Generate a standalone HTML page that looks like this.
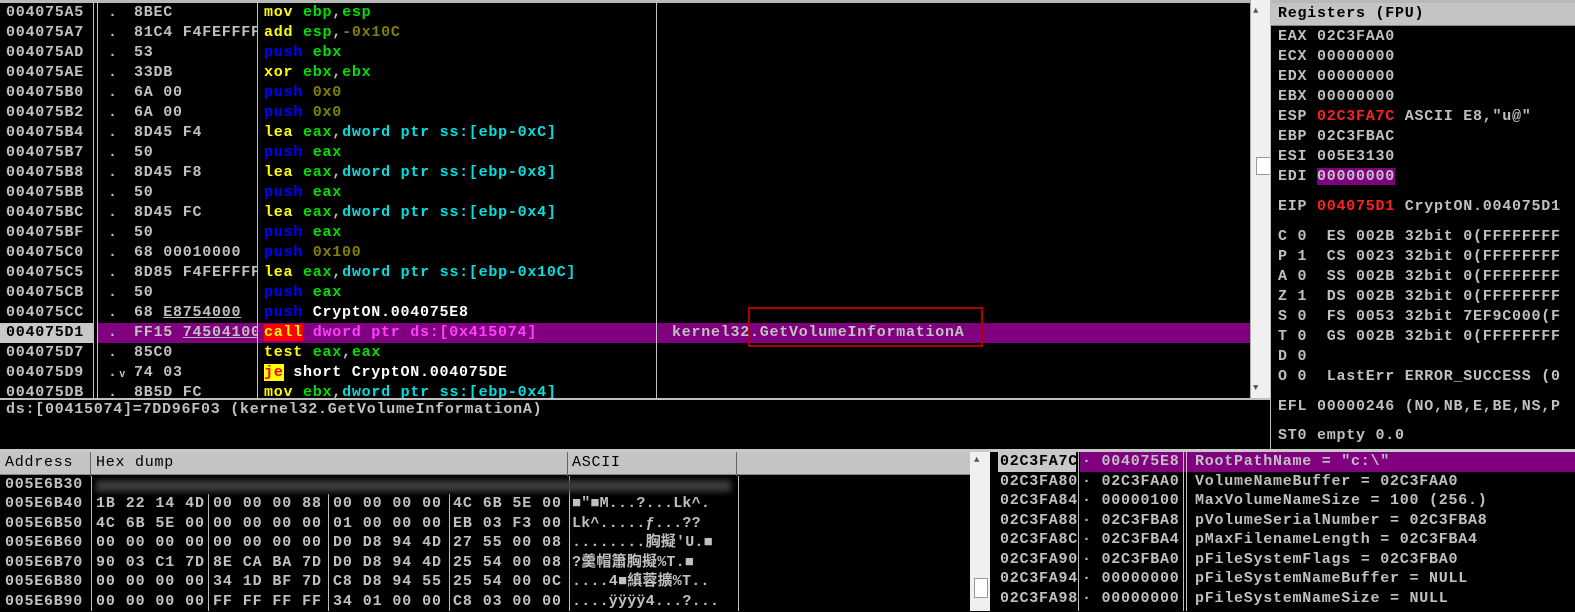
<!DOCTYPE html>
<html><head><meta charset="utf-8"><style>
*{margin:0;padding:0;box-sizing:border-box}
body{width:1575px;height:611px;background:#000;position:relative;overflow:hidden;font-family:"Liberation Mono","DejaVu Sans Mono","Noto Sans CJK SC",monospace;font-size:15px;letter-spacing:0.75px;color:#c0c0c0;font-weight:bold}
.a{position:absolute;white-space:pre;line-height:20px;height:20px}
.vl{position:absolute;background:#c0c0c0;width:1px}
.y{color:#ffff00}.b{color:#0000ff}.g{color:#00e000}.o{color:#808000}.c{color:#00e0e0}.w{color:#fff}.m{color:#ff40ff}.r{color:#ff2020}
.hdr{position:absolute;background:#c4c4c4;color:#000;line-height:22px;height:23px;font-weight:normal;border-bottom:1px solid #888}
.d{position:absolute;white-space:pre;line-height:20px;height:20px;letter-spacing:0.9px}
.as{position:absolute;white-space:pre;line-height:20px;height:20px;width:165px;overflow:hidden;letter-spacing:0.2px}
</style></head><body>
<div style="position:absolute;left:0;top:0;width:1250px;height:3px;background:#b8b8b8"></div>
<div style="position:absolute;left:97px;top:323px;width:1153px;height:20px;background:#800080"></div>
<div style="position:absolute;left:0;top:323px;width:93px;height:20px;background:#c8c8c8"></div>
<div class="vl" style="left:93px;top:0;height:398px"></div>
<div class="vl" style="left:97px;top:0;height:398px"></div>
<div class="vl" style="left:257px;top:0;height:398px"></div>
<div class="vl" style="left:656px;top:0;height:398px"></div>
<div style="position:absolute;left:748px;top:307px;width:235px;height:40px;border:2px solid #b00000"></div>

<div class="a" style="left:6px;top:3px">004075A5</div><div class="a" style="left:108px;top:3px">.</div><div class="a" style="left:134px;top:3px">8BEC</div><div class="a" style="left:264px;top:3px"><span class="y">mov</span> <span class="g">ebp</span>,<span class="g">esp</span></div>
<div class="a" style="left:6px;top:23px">004075A7</div><div class="a" style="left:108px;top:23px">.</div><div class="a" style="left:134px;top:23px;width:123px;overflow:hidden">81C4 F4FEFFFF</div><div class="a" style="left:264px;top:23px"><span class="y">add</span> <span class="g">esp</span>,<span class="o">-0x10C</span></div>
<div class="a" style="left:6px;top:43px">004075AD</div><div class="a" style="left:108px;top:43px">.</div><div class="a" style="left:134px;top:43px">53</div><div class="a" style="left:264px;top:43px"><span class="b">push</span> <span class="g">ebx</span></div>
<div class="a" style="left:6px;top:63px">004075AE</div><div class="a" style="left:108px;top:63px">.</div><div class="a" style="left:134px;top:63px">33DB</div><div class="a" style="left:264px;top:63px"><span class="y">xor</span> <span class="g">ebx</span>,<span class="g">ebx</span></div>
<div class="a" style="left:6px;top:83px">004075B0</div><div class="a" style="left:108px;top:83px">.</div><div class="a" style="left:134px;top:83px">6A 00</div><div class="a" style="left:264px;top:83px"><span class="b">push</span> <span class="o">0x0</span></div>
<div class="a" style="left:6px;top:103px">004075B2</div><div class="a" style="left:108px;top:103px">.</div><div class="a" style="left:134px;top:103px">6A 00</div><div class="a" style="left:264px;top:103px"><span class="b">push</span> <span class="o">0x0</span></div>
<div class="a" style="left:6px;top:123px">004075B4</div><div class="a" style="left:108px;top:123px">.</div><div class="a" style="left:134px;top:123px">8D45 F4</div><div class="a" style="left:264px;top:123px"><span class="y">lea</span> <span class="g">eax</span>,<span class="c">dword ptr ss:[ebp-0xC]</span></div>
<div class="a" style="left:6px;top:143px">004075B7</div><div class="a" style="left:108px;top:143px">.</div><div class="a" style="left:134px;top:143px">50</div><div class="a" style="left:264px;top:143px"><span class="b">push</span> <span class="g">eax</span></div>
<div class="a" style="left:6px;top:163px">004075B8</div><div class="a" style="left:108px;top:163px">.</div><div class="a" style="left:134px;top:163px">8D45 F8</div><div class="a" style="left:264px;top:163px"><span class="y">lea</span> <span class="g">eax</span>,<span class="c">dword ptr ss:[ebp-0x8]</span></div>
<div class="a" style="left:6px;top:183px">004075BB</div><div class="a" style="left:108px;top:183px">.</div><div class="a" style="left:134px;top:183px">50</div><div class="a" style="left:264px;top:183px"><span class="b">push</span> <span class="g">eax</span></div>
<div class="a" style="left:6px;top:203px">004075BC</div><div class="a" style="left:108px;top:203px">.</div><div class="a" style="left:134px;top:203px">8D45 FC</div><div class="a" style="left:264px;top:203px"><span class="y">lea</span> <span class="g">eax</span>,<span class="c">dword ptr ss:[ebp-0x4]</span></div>
<div class="a" style="left:6px;top:223px">004075BF</div><div class="a" style="left:108px;top:223px">.</div><div class="a" style="left:134px;top:223px">50</div><div class="a" style="left:264px;top:223px"><span class="b">push</span> <span class="g">eax</span></div>
<div class="a" style="left:6px;top:243px">004075C0</div><div class="a" style="left:108px;top:243px">.</div><div class="a" style="left:134px;top:243px">68 00010000</div><div class="a" style="left:264px;top:243px"><span class="b">push</span> <span class="o">0x100</span></div>
<div class="a" style="left:6px;top:263px">004075C5</div><div class="a" style="left:108px;top:263px">.</div><div class="a" style="left:134px;top:263px;width:123px;overflow:hidden">8D85 F4FEFFFF</div><div class="a" style="left:264px;top:263px"><span class="y">lea</span> <span class="g">eax</span>,<span class="c">dword ptr ss:[ebp-0x10C]</span></div>
<div class="a" style="left:6px;top:283px">004075CB</div><div class="a" style="left:108px;top:283px">.</div><div class="a" style="left:134px;top:283px">50</div><div class="a" style="left:264px;top:283px"><span class="b">push</span> <span class="g">eax</span></div>
<div class="a" style="left:6px;top:303px">004075CC</div><div class="a" style="left:108px;top:303px">.</div><div class="a" style="left:134px;top:303px">68 <u>E8754000</u></div><div class="a" style="left:264px;top:303px"><span class="b">push</span> <span class="w">CryptON.004075E8</span></div>
<div class="a" style="left:6px;top:323px;color:#000">004075D1</div><div class="a" style="left:108px;top:323px">.</div><div class="a" style="left:134px;top:323px;width:123px;overflow:hidden">FF15 <u>74504100</u></div><div class="a" style="left:264px;top:323px"><span style="background:#ff0000;color:#ffff00">call</span> <span class="m">dword ptr ds:[0x415074]</span></div><div class="a" style="left:672px;top:323px">kernel32.GetVolumeInformationA</div>
<div class="a" style="left:6px;top:343px">004075D7</div><div class="a" style="left:108px;top:343px">.</div><div class="a" style="left:134px;top:343px">85C0</div><div class="a" style="left:264px;top:343px"><span class="y">test</span> <span class="g">eax</span>,<span class="g">eax</span></div>
<div class="a" style="left:6px;top:363px">004075D9</div><div class="a" style="left:108px;top:363px">.ᵥ</div><div class="a" style="left:134px;top:363px">74 03</div><div class="a" style="left:264px;top:363px"><span style="background:#ffff00;color:#ff0000">je</span> <span class="w">short CryptON.004075DE</span></div>
<div class="a" style="left:6px;top:383px;height:15px;overflow:hidden">004075DB</div><div class="a" style="left:108px;top:383px;height:15px;overflow:hidden">.</div><div class="a" style="left:134px;top:383px;height:15px;overflow:hidden">8B5D FC</div><div class="a" style="left:264px;top:383px;height:15px;overflow:hidden"><span class="y">mov</span> <span class="g">ebx</span>,<span class="c">dword ptr ss:[ebp-0x4]</span></div>

<div style="position:absolute;left:1250px;top:0;width:20px;height:400px;background:#f0f0f0;border-left:1px solid #aaa"></div>
<div style="position:absolute;left:1256px;top:157px;width:15px;height:18px;background:#fff;border:1px solid #999"></div>
<div style="position:absolute;left:1253px;top:6px;font-size:9px;color:#555">▲</div>
<div style="position:absolute;left:1253px;top:383px;font-size:9px;color:#555">▼</div>
<div style="position:absolute;left:0;top:398px;width:1270px;height:2px;background:#c0c0c0"></div>
<div class="a" style="left:6px;top:400px">ds:[00415074]=7DD96F03 (kernel32.GetVolumeInformationA)</div>

<div class="vl" style="left:1270px;top:0;height:452px"></div>
<div style="position:absolute;left:1271px;top:0;width:304px;height:3px;background:#b8b8b8"></div>
<div class="hdr" style="left:1271px;top:3px;width:304px;padding-left:7px;font-weight:bold">Registers (FPU)</div>
<div class="a" style="left:1278px;top:27px">EAX 02C3FAA0</div>
<div class="a" style="left:1278px;top:47px">ECX 00000000</div>
<div class="a" style="left:1278px;top:67px">EDX 00000000</div>
<div class="a" style="left:1278px;top:87px">EBX 00000000</div>
<div class="a" style="left:1278px;top:107px">ESP <span class="r">02C3FA7C</span> ASCII E8,"u@"</div>
<div class="a" style="left:1278px;top:127px">EBP 02C3FBAC</div>
<div class="a" style="left:1278px;top:147px">ESI 005E3130</div>
<div class="a" style="left:1278px;top:167px">EDI <span style="background:#800080">00000000</span></div>
<div class="a" style="left:1278px;top:197px">EIP <span class="r">004075D1</span> CryptON.004075D1</div>
<div class="a" style="left:1278px;top:227px">C 0  ES 002B 32bit 0(FFFFFFFF</div>
<div class="a" style="left:1278px;top:247px">P 1  CS 0023 32bit 0(FFFFFFFF</div>
<div class="a" style="left:1278px;top:267px">A 0  SS 002B 32bit 0(FFFFFFFF</div>
<div class="a" style="left:1278px;top:287px">Z 1  DS 002B 32bit 0(FFFFFFFF</div>
<div class="a" style="left:1278px;top:307px">S 0  FS 0053 32bit 7EF9C000(F</div>
<div class="a" style="left:1278px;top:327px">T 0  GS 002B 32bit 0(FFFFFFFF</div>
<div class="a" style="left:1278px;top:347px">D 0</div>
<div class="a" style="left:1278px;top:367px">O 0  LastErr ERROR_SUCCESS (0</div>
<div class="a" style="left:1278px;top:397px">EFL 00000246 (NO,NB,E,BE,NS,P</div>
<div class="a" style="left:1278px;top:426px">ST0 empty 0.0</div>

<div style="position:absolute;left:0;top:449px;width:1575px;height:3px;background:#c8c8c8"></div>

<div class="hdr" style="left:0;top:452px;width:970px"></div>
<div class="a" style="left:5px;top:453px;color:#000;font-weight:normal">Address</div>
<div class="a" style="left:96px;top:453px;color:#000;font-weight:normal">Hex dump</div>
<div class="a" style="left:572px;top:453px;color:#000;font-weight:normal">ASCII</div>
<div class="vl" style="left:90px;top:452px;height:24px;background:#666"></div>
<div class="vl" style="left:567px;top:452px;height:24px;background:#666"></div>
<div class="vl" style="left:736px;top:452px;height:24px;background:#666"></div>
<div class="vl" style="left:91px;top:476px;height:135px"></div>
<div class="vl" style="left:208px;top:494px;height:117px"></div>
<div class="vl" style="left:328px;top:494px;height:117px"></div>
<div class="vl" style="left:449px;top:494px;height:117px"></div>
<div class="vl" style="left:569px;top:476px;height:135px"></div>
<div class="vl" style="left:738px;top:476px;height:135px"></div>
<div class="a" style="left:5px;top:475px">005E6B30</div>
<div style="position:absolute;left:96px;top:480px;width:635px;height:12px;background:#3a3a3a;filter:blur(3px)"></div>

<div class="a" style="left:5px;top:494px">005E6B40</div><div class="d" style="left:96px;top:494px">1B 22 14 4D</div><div class="d" style="left:213px;top:494px">00 00 00 88</div><div class="d" style="left:333px;top:494px">00 00 00 00</div><div class="d" style="left:453px;top:494px">4C 6B 5E 00</div><div class="as" style="left:572px;top:494px">■"■M...?...Lk^.</div>
<div class="a" style="left:5px;top:514px">005E6B50</div><div class="d" style="left:96px;top:514px">4C 6B 5E 00</div><div class="d" style="left:213px;top:514px">00 00 00 00</div><div class="d" style="left:333px;top:514px">01 00 00 00</div><div class="d" style="left:453px;top:514px">EB 03 F3 00</div><div class="as" style="left:572px;top:514px">Lk^.....ƒ...??</div>
<div class="a" style="left:5px;top:533px">005E6B60</div><div class="d" style="left:96px;top:533px">00 00 00 00</div><div class="d" style="left:213px;top:533px">00 00 00 00</div><div class="d" style="left:333px;top:533px">D0 D8 94 4D</div><div class="d" style="left:453px;top:533px">27 55 00 08</div><div class="as" style="left:572px;top:533px">........胸擬'U.■</div>
<div class="a" style="left:5px;top:553px">005E6B70</div><div class="d" style="left:96px;top:553px">90 03 C1 7D</div><div class="d" style="left:213px;top:553px">8E CA BA 7D</div><div class="d" style="left:333px;top:553px">D0 D8 94 4D</div><div class="d" style="left:453px;top:553px">25 54 00 08</div><div class="as" style="left:572px;top:553px">?羹帽簫胸擬%T.■</div>
<div class="a" style="left:5px;top:572px">005E6B80</div><div class="d" style="left:96px;top:572px">00 00 00 00</div><div class="d" style="left:213px;top:572px">34 1D BF 7D</div><div class="d" style="left:333px;top:572px">C8 D8 94 55</div><div class="d" style="left:453px;top:572px">25 54 00 0C</div><div class="as" style="left:572px;top:572px">....4■縝蓉擴%T..</div>
<div class="a" style="left:5px;top:592px">005E6B90</div><div class="d" style="left:96px;top:592px">00 00 00 00</div><div class="d" style="left:213px;top:592px">FF FF FF FF</div><div class="d" style="left:333px;top:592px">34 01 00 00</div><div class="d" style="left:453px;top:592px">C8 03 00 00</div><div class="as" style="left:572px;top:592px">....ÿÿÿÿ4...?...</div>

<div style="position:absolute;left:970px;top:452px;width:20px;height:159px;background:#f0f0f0"></div>
<div style="position:absolute;left:974px;top:578px;width:14px;height:20px;background:#fff;border:1px solid #999"></div>
<div style="position:absolute;left:974px;top:455px;font-size:9px;color:#555">▲</div>
<div style="position:absolute;left:990px;top:452px;width:8px;height:159px;background:#000"></div>

<div style="position:absolute;left:998px;top:452px;width:78px;height:20px;background:#c8c8c8"></div>
<div style="position:absolute;left:1080px;top:452px;width:495px;height:20px;background:#800080"></div>
<div class="vl" style="left:1078px;top:452px;height:159px"></div>
<div class="vl" style="left:1183px;top:452px;height:159px"></div>
<div class="vl" style="left:1186px;top:452px;height:159px"></div>
<div class="a" style="left:1000px;top:452px;color:#000">02C3FA7C</div><div class="a" style="left:1082px;top:452px">· 004075E8</div><div class="a" style="left:1195px;top:452px">RootPathName = "c:\"</div>
<div class="a" style="left:1000px;top:472px">02C3FA80</div><div class="a" style="left:1082px;top:472px">· 02C3FAA0</div><div class="a" style="left:1195px;top:472px">VolumeNameBuffer = 02C3FAA0</div>
<div class="a" style="left:1000px;top:491px">02C3FA84</div><div class="a" style="left:1082px;top:491px">· 00000100</div><div class="a" style="left:1195px;top:491px">MaxVolumeNameSize = 100 (256.)</div>
<div class="a" style="left:1000px;top:511px">02C3FA88</div><div class="a" style="left:1082px;top:511px">· 02C3FBA8</div><div class="a" style="left:1195px;top:511px">pVolumeSerialNumber = 02C3FBA8</div>
<div class="a" style="left:1000px;top:530px">02C3FA8C</div><div class="a" style="left:1082px;top:530px">· 02C3FBA4</div><div class="a" style="left:1195px;top:530px">pMaxFilenameLength = 02C3FBA4</div>
<div class="a" style="left:1000px;top:550px">02C3FA90</div><div class="a" style="left:1082px;top:550px">· 02C3FBA0</div><div class="a" style="left:1195px;top:550px">pFileSystemFlags = 02C3FBA0</div>
<div class="a" style="left:1000px;top:569px">02C3FA94</div><div class="a" style="left:1082px;top:569px">· 00000000</div><div class="a" style="left:1195px;top:569px">pFileSystemNameBuffer = NULL</div>
<div class="a" style="left:1000px;top:589px">02C3FA98</div><div class="a" style="left:1082px;top:589px">· 00000000</div><div class="a" style="left:1195px;top:589px">pFileSystemNameSize = NULL</div>
</body></html>
